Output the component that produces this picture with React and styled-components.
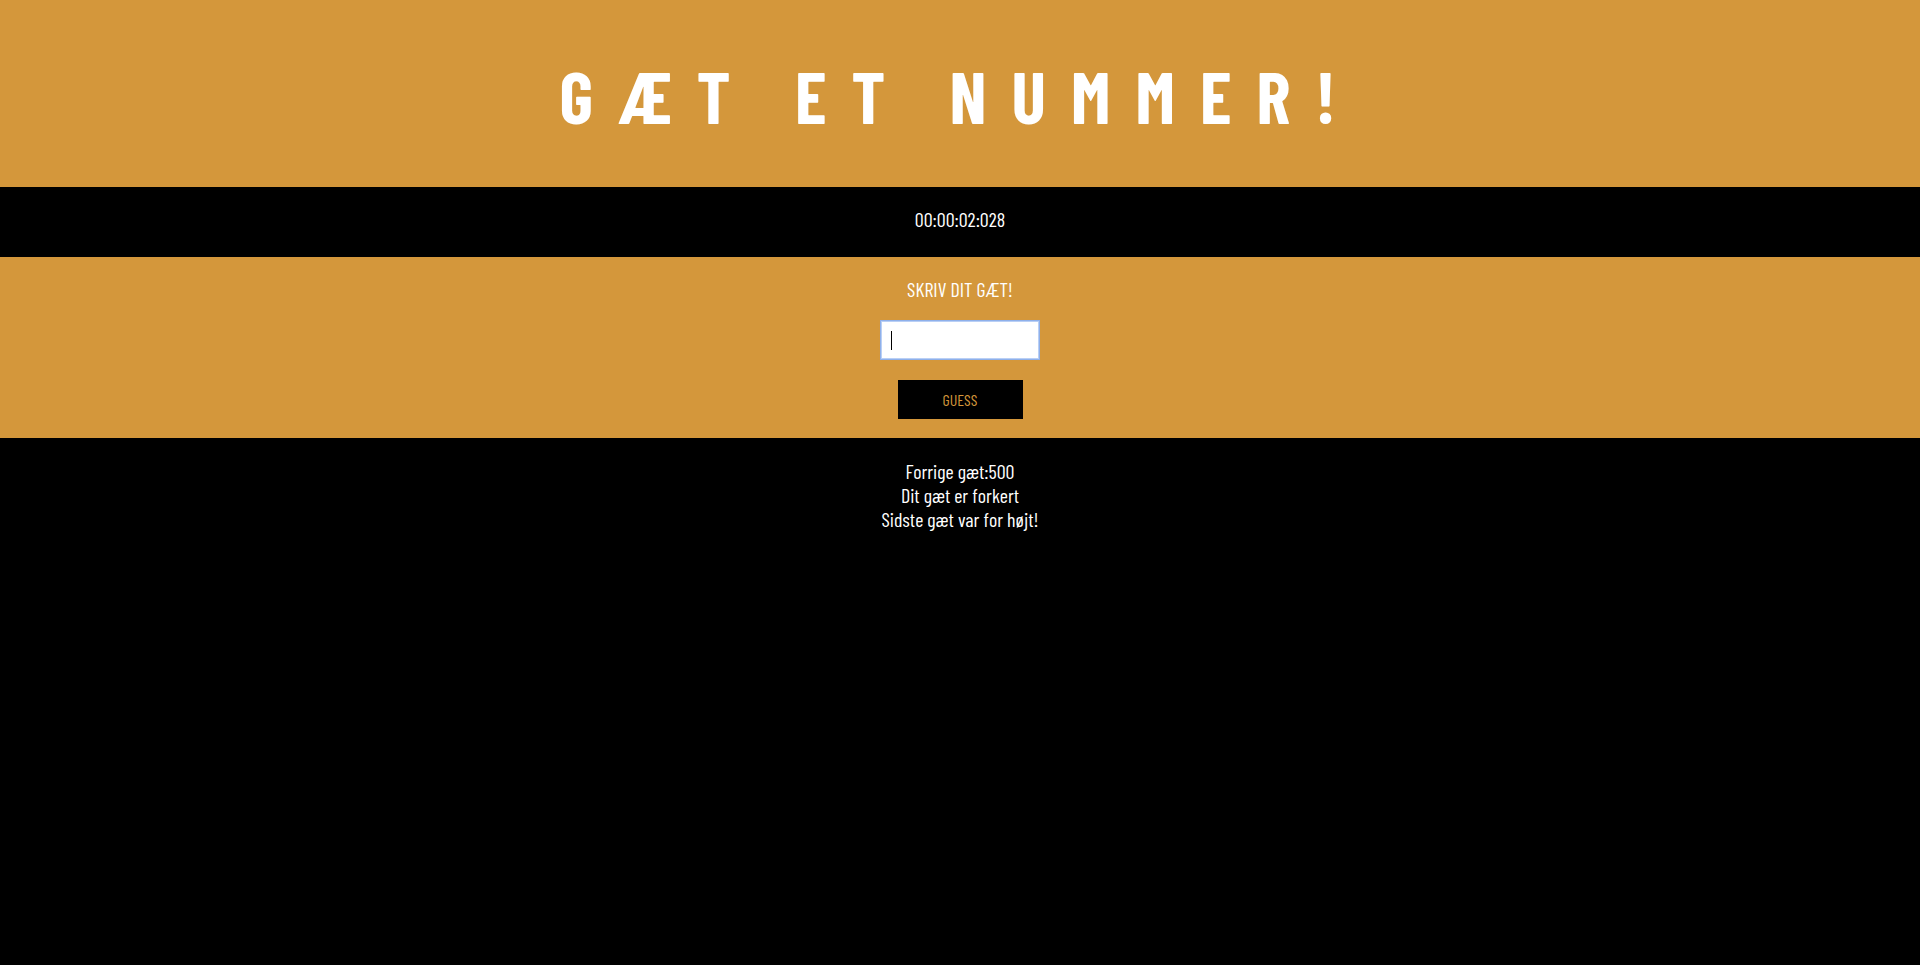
import React, { useState } from "react";
import styled, { createGlobalStyle } from "styled-components";

const GlobalStyle = createGlobalStyle`
  html, body {
    margin: 0;
    padding: 0;
    background: #000;
  }
  body {
    font-family: "Barlow Condensed", "Roboto Condensed", "Liberation Sans", sans-serif;
    color: #fff;
  }
`;

const ORANGE = "#d4973b";

function App() {
  const [guess, setGuess] = useState("");
  return (
    <Page>
      <GlobalStyle />
      <Header>
        <Title>GÆT ET NUMMER!</Title>
      </Header>
      <TimerBar>
        <Timer>00:00:02:028</Timer>
      </TimerBar>
      <GuessForm onSubmit={(e) => e.preventDefault()}>
        <Label htmlFor="guess">SKRIV DIT GÆT!</Label>
        <InputWrap>
          <Input
            id="guess"
            type="text"
            autoFocus
            value={guess}
            onChange={(e) => setGuess(e.target.value)}
          />
          {guess === "" && <Caret />}
        </InputWrap>
        <Button type="submit">GUESS</Button>
      </GuessForm>
      <Result>
        <Line>Forrige gæt:500</Line>
        <Line>Dit gæt er forkert</Line>
        <Line>Sidste gæt var for højt!</Line>
      </Result>
    </Page>
  );
}

const Page = styled.div`
  min-height: 965px;
  background: #000;
`;

const Header = styled.header`
  height: 187px;
  background: ${ORANGE};
  display: flex;
  align-items: center;
  justify-content: center;
`;

const Title = styled.h1`
  margin: 2px 0 0 0;
  font-family: "Barlow Condensed", "Roboto Condensed", "Liberation Sans", sans-serif;
  font-weight: 700;
  font-size: 72px;
  line-height: 1;
  letter-spacing: 25px;
  color: #fff;
`;

const TimerBar = styled.div`
  height: 70px;
  background: #000;
  display: flex;
  align-items: center;
  justify-content: center;
`;

const Timer = styled.div`
  font-size: 20px;
  line-height: 24px;
  color: #fff;
  margin-top: -6px;
`;

const GuessForm = styled.form`
  background: ${ORANGE};
  padding: 20px 0 19px;
  display: flex;
  flex-direction: column;
  align-items: center;
`;

const Label = styled.label`
  font-size: 20px;
  line-height: 24px;
  color: #fff;
  margin-bottom: 19px;
`;

const InputWrap = styled.div`
  position: relative;
  margin-bottom: 20px;
`;

const Input = styled.input`
  display: block;
  box-sizing: border-box;
  width: 160px;
  height: 40px;
  padding: 0 10px;
  font-family: inherit;
  font-size: 20px;
  background: #fff;
  border: 1px solid #8fb0ea;
  box-shadow: inset 0 0 0 1px #b9cff5;
  outline: none;
  caret-color: transparent;
`;

const Caret = styled.span`
  position: absolute;
  left: 11px;
  top: 11px;
  width: 1px;
  height: 19px;
  background: #000;
  pointer-events: none;
`;

const Button = styled.button`
  width: 125px;
  height: 39px;
  border: none;
  background: #000;
  color: ${ORANGE};
  font-family: inherit;
  font-size: 16px;
  cursor: pointer;
`;

const Result = styled.div`
  padding-top: 21px;
  display: flex;
  flex-direction: column;
  align-items: center;
`;

const Line = styled.div`
  font-size: 20px;
  line-height: 24px;
  color: #fff;
`;

export default App;
